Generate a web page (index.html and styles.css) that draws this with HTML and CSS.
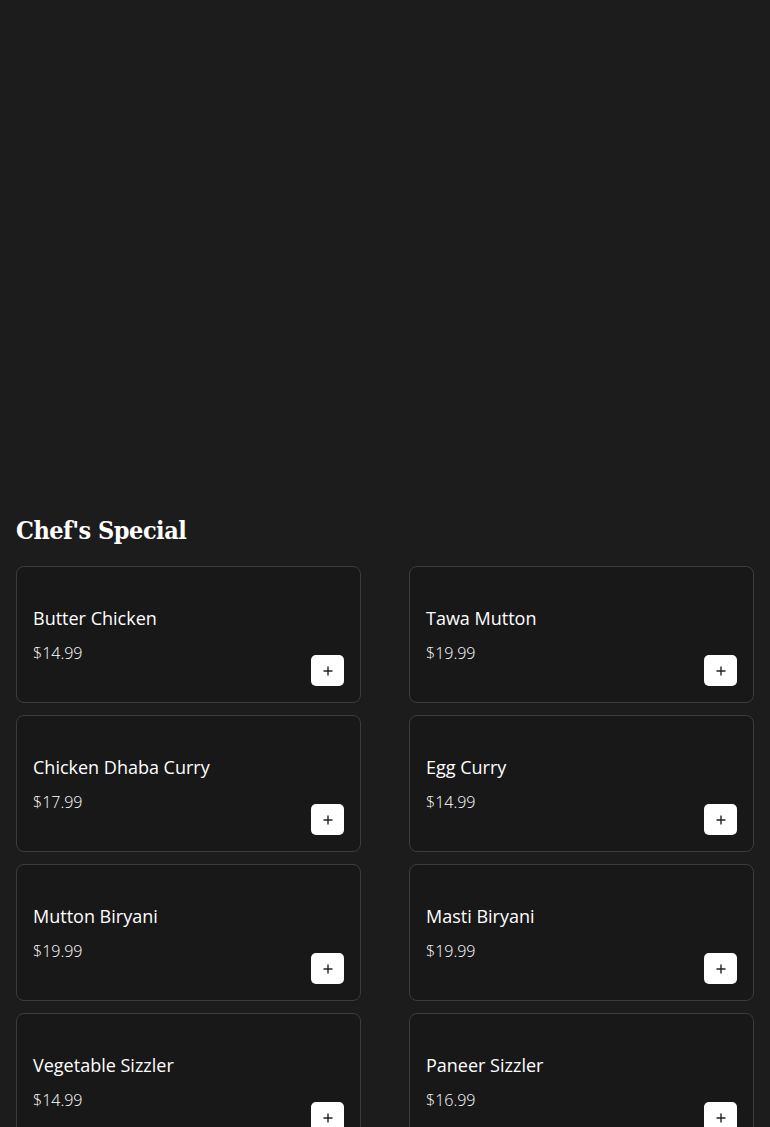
FILE: index.html
```html
<!DOCTYPE html>
<html lang="en">
<head>
    <meta charset="UTF-8">
    <meta name="viewport" content="width=device-width, initial-scale=1.0">
    <title>Chef's Special</title>
    <link rel="stylesheet" href="styles.css">
</head>
<body>
    <div class="hero"></div>

    <section class="menu">
        <h2 class="menu-title">Chef's Special</h2>
        <div class="menu-grid">
            <div class="dish-card">
                <div class="dish-info">
                    <h3 class="dish-name">Butter Chicken</h3>
                    <p class="dish-price">$14.99</p>
                </div>
                <button class="add-btn"><svg viewBox="0 0 10 10"><path d="M5 0.5v9M0.5 5h9"/></svg></button>
            </div>
            <div class="dish-card">
                <div class="dish-info">
                    <h3 class="dish-name">Tawa Mutton</h3>
                    <p class="dish-price">$19.99</p>
                </div>
                <button class="add-btn"><svg viewBox="0 0 10 10"><path d="M5 0.5v9M0.5 5h9"/></svg></button>
            </div>
            <div class="dish-card">
                <div class="dish-info">
                    <h3 class="dish-name">Chicken Dhaba Curry</h3>
                    <p class="dish-price">$17.99</p>
                </div>
                <button class="add-btn"><svg viewBox="0 0 10 10"><path d="M5 0.5v9M0.5 5h9"/></svg></button>
            </div>
            <div class="dish-card">
                <div class="dish-info">
                    <h3 class="dish-name">Egg Curry</h3>
                    <p class="dish-price">$14.99</p>
                </div>
                <button class="add-btn"><svg viewBox="0 0 10 10"><path d="M5 0.5v9M0.5 5h9"/></svg></button>
            </div>
            <div class="dish-card">
                <div class="dish-info">
                    <h3 class="dish-name">Mutton Biryani</h3>
                    <p class="dish-price">$19.99</p>
                </div>
                <button class="add-btn"><svg viewBox="0 0 10 10"><path d="M5 0.5v9M0.5 5h9"/></svg></button>
            </div>
            <div class="dish-card">
                <div class="dish-info">
                    <h3 class="dish-name">Masti Biryani</h3>
                    <p class="dish-price">$19.99</p>
                </div>
                <button class="add-btn"><svg viewBox="0 0 10 10"><path d="M5 0.5v9M0.5 5h9"/></svg></button>
            </div>
            <div class="dish-card">
                <div class="dish-info">
                    <h3 class="dish-name">Vegetable Sizzler</h3>
                    <p class="dish-price">$14.99</p>
                </div>
                <button class="add-btn"><svg viewBox="0 0 10 10"><path d="M5 0.5v9M0.5 5h9"/></svg></button>
            </div>
            <div class="dish-card">
                <div class="dish-info">
                    <h3 class="dish-name">Paneer Sizzler</h3>
                    <p class="dish-price">$16.99</p>
                </div>
                <button class="add-btn"><svg viewBox="0 0 10 10"><path d="M5 0.5v9M0.5 5h9"/></svg></button>
            </div>
        </div>
    </section>
</body>
</html>
```

FILE: styles.css
```css
* {
    margin: 0;
    padding: 0;
    box-sizing: border-box;
}

body {
    font-family: 'Open Sans', 'Noto Sans', sans-serif;
    background-color: #1c1c1c;
    color: #ffffff;
}

.hero {
    height: 500px;
}

.menu {
    padding: 0 16px 40px;
}

.menu-title {
    font-family: 'DejaVu Serif', serif;
    font-stretch: condensed;
    font-weight: 700;
    font-size: 25px;
    line-height: 32px;
    letter-spacing: -0.5px;
    margin-top: 15px;
    margin-bottom: 19px;
}

.menu-grid {
    display: grid;
    grid-template-columns: 1fr 1fr;
    column-gap: 48px;
    row-gap: 12px;
}

.dish-card {
    display: flex;
    align-items: center;
    justify-content: space-between;
    min-height: 137px;
    padding: 16px;
    background-color: #181818;
    border: 1px solid #3c3c3c;
    border-radius: 8px;
}

.dish-name {
    font-size: 18px;
    font-weight: 500;
    line-height: 27px;
    margin-bottom: 9px;
}

.dish-price {
    font-size: 16px;
    font-weight: 300;
    line-height: 24px;
}

.add-btn {
    align-self: flex-end;
    display: flex;
    align-items: center;
    justify-content: center;
    width: 33px;
    height: 31px;
    border: none;
    border-radius: 5px;
    background-color: #ffffff;
    cursor: pointer;
}

.add-btn svg {
    width: 10px;
    height: 10px;
    fill: none;
    stroke: #222222;
    stroke-width: 1.4;
}
```
